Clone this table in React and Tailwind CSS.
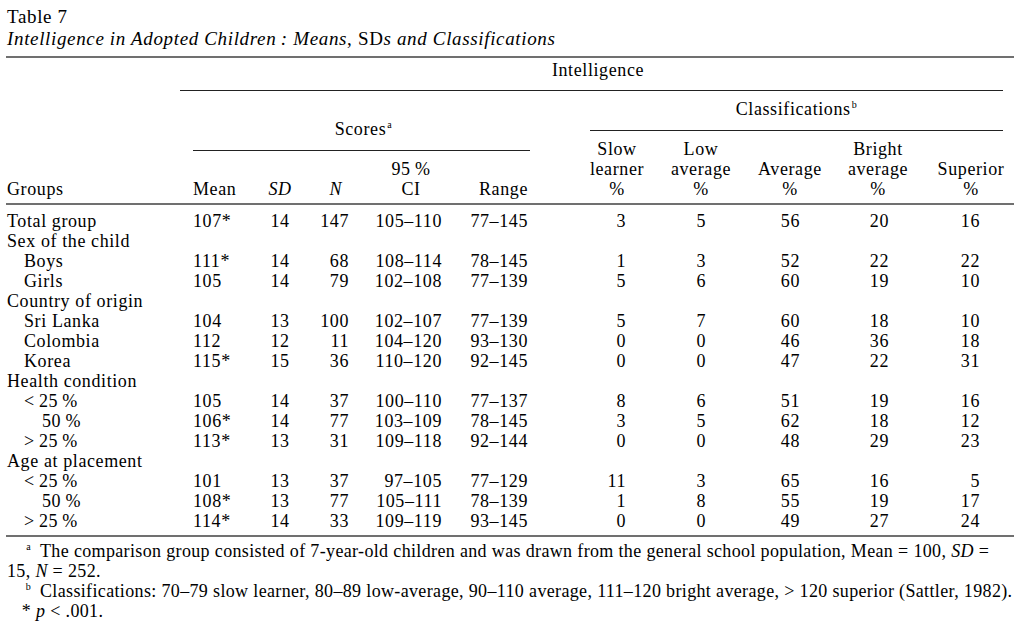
const rows = [
  { label: "Total group", lvl: 0, v: ["107*", "14", "147", "105–110", "77–145", "3", "5", "56", "20", "16"] },
  { label: "Sex of the child", lvl: 0 },
  { label: "Boys", lvl: 1, v: ["111*", "14", "68", "108–114", "78–145", "1", "3", "52", "22", "22"] },
  { label: "Girls", lvl: 1, v: ["105", "14", "79", "102–108", "77–139", "5", "6", "60", "19", "10"] },
  { label: "Country of origin", lvl: 0 },
  { label: "Sri Lanka", lvl: 1, v: ["104", "13", "100", "102–107", "77–139", "5", "7", "60", "18", "10"] },
  { label: "Colombia", lvl: 1, v: ["112", "12", "11", "104–120", "93–130", "0", "0", "46", "36", "18"] },
  { label: "Korea", lvl: 1, v: ["115*", "15", "36", "110–120", "92–145", "0", "0", "47", "22", "31"] },
  { label: "Health condition", lvl: 0 },
  { label: "<\u200925\u2009%", lvl: 1, v: ["105", "14", "37", "100–110", "77–137", "8", "6", "51", "19", "16"] },
  { label: "50\u2009%", lvl: 2, v: ["106*", "14", "77", "103–109", "78–145", "3", "5", "62", "18", "12"] },
  { label: ">\u200925\u2009%", lvl: 1, v: ["113*", "13", "31", "109–118", "92–144", "0", "0", "48", "29", "23"] },
  { label: "Age at placement", lvl: 0 },
  { label: "<\u200925\u2009%", lvl: 1, v: ["101", "13", "37", "97–105", "77–129", "11", "3", "65", "16", "5"] },
  { label: "50\u2009%", lvl: 2, v: ["108*", "13", "77", "105–111", "78–139", "1", "8", "55", "19", "17"] },
  { label: ">\u200925\u2009%", lvl: 1, v: ["114*", "14", "33", "109–119", "93–145", "0", "0", "49", "27", "24"] },
];

const cellCls = [
  "w-[60px] pl-[3px] text-left",
  "w-[60px] text-center",
  "w-[50px] pr-[11px] text-right",
  "w-[90px] pr-[8px] text-right",
  "w-[85px] pr-[7px] text-right",
  "w-[125px] pr-[34px] text-right",
  "w-[82px] pr-[36px] text-right",
  "w-[96px] pr-[38px] text-right",
  "w-[90px] pr-[39px] text-right",
  "w-[86px] pr-[34px] text-right",
];

const indent = ["pl-[1px]", "pl-[18px]", "pl-[36px]"];

const Sup = ({ children }) => (
  <sup className="text-[10px] relative -top-[7px] ml-[1px] align-baseline">{children}</sup>
);

const HeadCell = ({ cls, lines }) => (
  <div className={`${cls} flex flex-col justify-end shrink-0`}>
    {lines.map((l, i) => (
      <div key={i} className="h-[20px]">{l}</div>
    ))}
  </div>
);

export default function App() {
  return (
    <div
      className="w-[1028px] h-[630px] bg-white text-black text-[18px] leading-[20px] tracking-[0.6px] overflow-hidden"
      style={{ fontFamily: '"Liberation Serif", "Times New Roman", serif' }}
    >
      <div className="ml-[6px] w-[1008px]">
        <div className="pt-[6px] pb-[6px] pl-[1px] border-b-2 border-[#707070] tracking-[0.65px]">
          <div className="text-[19px] leading-[22px]">Table 7</div>
          <div className="text-[19px] leading-[22px] italic">
            Intelligence in Adopted Children{"\u2009"}: Means<span className="not-italic">,</span>{" "}
            <span className="not-italic">SD</span>s and Classifications
          </div>
        </div>

        {/* header */}
        <div className="ml-[174px] w-[823px] pt-[2px] pb-[10px] pl-[13px] border-b border-[#222] text-center">
          Intelligence
        </div>
        <div className="flex border-b-2 border-[#707070]">
          <div className="w-[184px] shrink-0 flex items-end pl-[1px] pb-[4px]">Groups</div>
          <div className="w-[345px] shrink-0 flex flex-col justify-end pb-[4px]">
            <div className="h-[20px] text-center pl-[2px]">
              Scores<Sup>a</Sup>
            </div>
            <div className="mt-[11px] ml-[3px] w-[337px] border-b border-[#222]" />
            <div className="mt-[8px] flex">
              <HeadCell cls="w-[60px] pl-[3px]" lines={["Mean"]} />
              <HeadCell cls="w-[60px] text-center italic" lines={["SD"]} />
              <HeadCell cls="w-[50px] pr-[18px] text-right italic" lines={["N"]} />
              <HeadCell cls="w-[90px] pl-[12px] text-center" lines={["95\u2009%", "CI"]} />
              <HeadCell cls="w-[85px] pr-[7px] text-right" lines={["Range"]} />
            </div>
          </div>
          <div className="w-[479px] shrink-0 flex flex-col justify-end pt-[8px] pb-[4px]">
            <div className="h-[20px] ml-[55px] w-[413px] text-center">
              Classifications<Sup>b</Sup>
            </div>
            <div className="mt-[11px] ml-[55px] w-[413px] border-b border-[#222]" />
            <div className="mt-[8px] flex">
              <HeadCell cls="w-[125px] pl-[39px] text-center" lines={["Slow", "learner", "%"]} />
              <HeadCell cls="w-[82px] text-center" lines={["Low", "average", "%"]} />
              <HeadCell cls="w-[96px] text-center" lines={["Average", "%"]} />
              <HeadCell cls="w-[90px] pr-[10px] text-center" lines={["Bright", "average", "%"]} />
              <HeadCell cls="w-[86px] text-center" lines={["Superior", "%"]} />
            </div>
          </div>
        </div>

        {/* body */}
        <div className="pt-[6px] pb-[4px] border-b-2 border-[#707070]">
          {rows.map((r, i) => (
            <div key={i} className="flex h-[20px]">
              <div className={`w-[184px] shrink-0 ${indent[r.lvl]}`}>{r.label}</div>
              {r.v &&
                r.v.map((val, j) => (
                  <div key={j} className={`${cellCls[j]} shrink-0`}>
                    {val}
                  </div>
                ))}
            </div>
          ))}
        </div>

        {/* notes */}
        <div className="pt-[4px] text-[18px] tracking-[0.35px] whitespace-nowrap">
          <div className="pl-[1px] flex">
            <span className="w-[24px] text-right">
              <Sup>a</Sup>
            </span>
            <span className="pl-[9px]">
              The comparison group consisted of 7-year-old children and was drawn from the general school
              population, Mean = 100, <i>SD</i> =
            </span>
          </div>
          <div className="pl-[1px]">
            15, <i>N</i> = 252.
          </div>
          <div className="pl-[1px] flex">
            <span className="w-[24px] text-right">
              <Sup>b</Sup>
            </span>
            <span className="pl-[9px]">
              Classifications: 70–79 slow learner, 80–89 low-average, 90–110 average, 111–120 bright average,
              {" "}&gt; 120 superior (Sattler, 1982).
            </span>
          </div>
          <div className="pl-[1px] flex">
            <span className="w-[24px] text-right">*</span>
            <span className="pl-[5px]">
              <i>p</i> &lt; .001.
            </span>
          </div>
        </div>
      </div>
    </div>
  );
}
